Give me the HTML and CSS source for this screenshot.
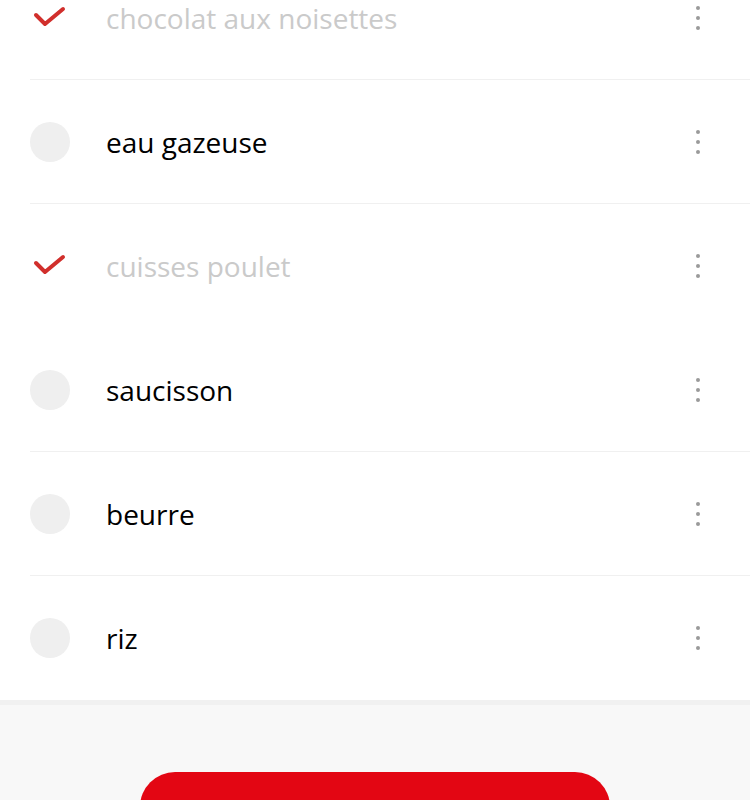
FILE: index.html
```html
<!DOCTYPE html>
<html lang="fr">
<head>
  <meta charset="UTF-8">
  <meta name="viewport" content="width=device-width, initial-scale=1.0">
  <title>Liste de courses</title>
  <link rel="stylesheet" href="styles.css">
</head>
<body>

  <!-- Shopping list -->
  <ul class="item-list">
    <li class="item done">
      <span class="item-check">
        <svg viewBox="0 0 40 40" width="40" height="40"><polyline points="6,17 15,26 33,11" /></svg>
      </span>
      <span class="item-name">chocolat aux noisettes</span>
      <span class="item-menu"><i></i><i></i><i></i></span>
    </li>
    <li class="item">
      <span class="item-check"></span>
      <span class="item-name">eau gazeuse</span>
      <span class="item-menu"><i></i><i></i><i></i></span>
    </li>
    <li class="item done no-line">
      <span class="item-check">
        <svg viewBox="0 0 40 40" width="40" height="40"><polyline points="6,17 15,26 33,11" /></svg>
      </span>
      <span class="item-name">cuisses poulet</span>
      <span class="item-menu"><i></i><i></i><i></i></span>
    </li>
    <li class="item">
      <span class="item-check"></span>
      <span class="item-name">saucisson</span>
      <span class="item-menu"><i></i><i></i><i></i></span>
    </li>
    <li class="item">
      <span class="item-check"></span>
      <span class="item-name">beurre</span>
      <span class="item-menu"><i></i><i></i><i></i></span>
    </li>
    <li class="item no-line">
      <span class="item-check"></span>
      <span class="item-name">riz</span>
      <span class="item-menu"><i></i><i></i><i></i></span>
    </li>
  </ul>

  <!-- Footer action -->
  <div class="list-footer">
    <button type="button" class="clear-btn">Supprimer les articles cochés</button>
  </div>

</body>
</html>
```

FILE: styles.css
```css
/* Basic Reset */
* {
  margin: 0;
  padding: 0;
  box-sizing: border-box;
}

body {
  font-family: 'Open Sans', 'Noto Sans', sans-serif;
  background: #f8f8f8;
  height: 100vh;
  overflow: hidden;
}

/* List */
.item-list {
  list-style: none;
  background: #fff;
  margin-top: -44px;
}

.item {
  display: flex;
  align-items: center;
  height: 124px;
  margin-left: 30px;
  padding-right: 40px;
  border-bottom: 1px solid #f0f0f0;
}

.item.no-line {
  border-bottom-color: transparent;
}

/* Check circle */
.item-check {
  width: 40px;
  height: 40px;
  flex-shrink: 0;
  border-radius: 50%;
  background: #efefef;
}

.item.done .item-check {
  background: transparent;
}

.item-check svg {
  display: block;
}

.item-check polyline {
  fill: none;
  stroke: #d12f2c;
  stroke-width: 4;
  stroke-linecap: round;
  stroke-linejoin: round;
}

.item-name {
  flex: 1;
  margin-left: 36px;
  font-size: 28px;
  color: #000;
}

.item.done .item-name {
  color: #cacaca;
}

/* Kebab menu */
.item-menu {
  width: 24px;
  display: flex;
  flex-direction: column;
  align-items: center;
  gap: 6px;
}

.item-menu i {
  width: 4px;
  height: 4px;
  border-radius: 50%;
  background: #9a9a9a;
}

/* Footer */
.list-footer {
  border-top: 5px solid #f1f1f1;
  padding-top: 67px;
  display: flex;
  justify-content: center;
}

.clear-btn {
  width: 470px;
  height: 70px;
  border: none;
  border-radius: 35px;
  background: #e30613;
  color: #fff;
  font-family: inherit;
  font-size: 22px;
  font-weight: 700;
}
```
